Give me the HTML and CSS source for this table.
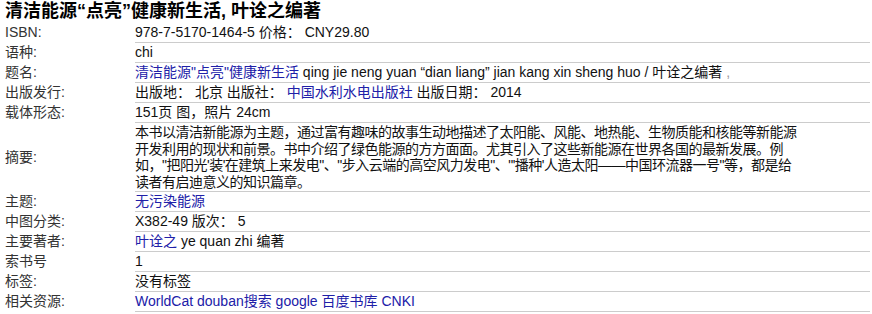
FILE: index.html
```html
<!DOCTYPE html>
<html lang="zh-CN">
<head>
<meta charset="utf-8">
<title>清洁能源“点亮”健康新生活</title>
<link rel="stylesheet" href="styles.css">
</head>
<body>
<h1 class="book-title">清洁能源“点亮”健康新生活, 叶诠之编著</h1>
<table class="detail">
  <tr><td class="label">ISBN:</td><td class="value">978-7-5170-1464-5 价格： CNY29.80</td></tr>
  <tr><td class="label">语种:</td><td class="value">chi</td></tr>
  <tr><td class="label">题名:</td><td class="value"><a href="#">清洁能源"点亮"健康新生活</a> qing jie neng yuan “dian liang” jian kang xin sheng huo / 叶诠之编著 <span class="muted">,</span></td></tr>
  <tr><td class="label">出版发行:</td><td class="value">出版地： 北京 出版社： <a href="#">中国水利水电出版社</a> 出版日期： 2014</td></tr>
  <tr><td class="label">载体形态:</td><td class="value">151页 图，照片 24cm</td></tr>
  <tr><td class="label">摘要:</td><td class="value"><div class="abstract">本书以清洁新能源为主题，通过富有趣味的故事生动地描述了太阳能、风能、地热能、生物质能和核能等新能源<br>开发利用的现状和前景。书中介绍了绿色能源的方方面面。尤其引入了这些新能源在世界各国的最新发展。例<br>如，"把阳光'装'在建筑上来发电"、"步入云端的高空风力发电"、"'播种'人造太阳——中国环流器一号"等，都是给<br>读者有启迪意义的知识篇章。</div></td></tr>
  <tr><td class="label">主题:</td><td class="value"><a href="#">无污染能源</a></td></tr>
  <tr><td class="label">中图分类:</td><td class="value">X382-49 版次： 5</td></tr>
  <tr><td class="label">主要著者:</td><td class="value"><a href="#">叶诠之</a> ye quan zhi 编著</td></tr>
  <tr><td class="label">索书号</td><td class="value">1</td></tr>
  <tr><td class="label">标签:</td><td class="value">没有标签</td></tr>
  <tr><td class="label">相关资源:</td><td class="value"><a href="#">WorldCat</a> <a href="#">douban搜索</a> <a href="#">google</a> <a href="#">百度书库</a> <a href="#">CNKI</a></td></tr>
</table>
</body>
</html>
```

FILE: styles.css
```css
html, body {
  margin: 0;
  padding: 0;
  background: #fff;
}
body {
  padding: 0 2px 0 5px;
  font-family: "Liberation Sans", "Noto Sans CJK SC", sans-serif;
  font-size: 14px;
  color: #111;
}
.book-title {
  margin: 0;
  height: 23px;
  font-size: 18px;
  line-height: 22px;
  font-weight: bold;
  color: #000;
}
.detail {
  width: 100%;
  border-collapse: collapse;
  border-spacing: 0;
}
.detail td {
  padding: 1px 0 1px 0;
  line-height: 17px;
  vertical-align: middle;
}
.label {
  width: 130px;
  color: #333;
}
.value {
  border-bottom: 1px solid #ccc;
  color: #111;
}
.value a {
  color: #2020a8;
  text-decoration: none;
}
.muted {
  color: #999;
}
.abstract {
  white-space: nowrap;
  line-height: 16.5px;
  letter-spacing: -0.5px;
}
```
